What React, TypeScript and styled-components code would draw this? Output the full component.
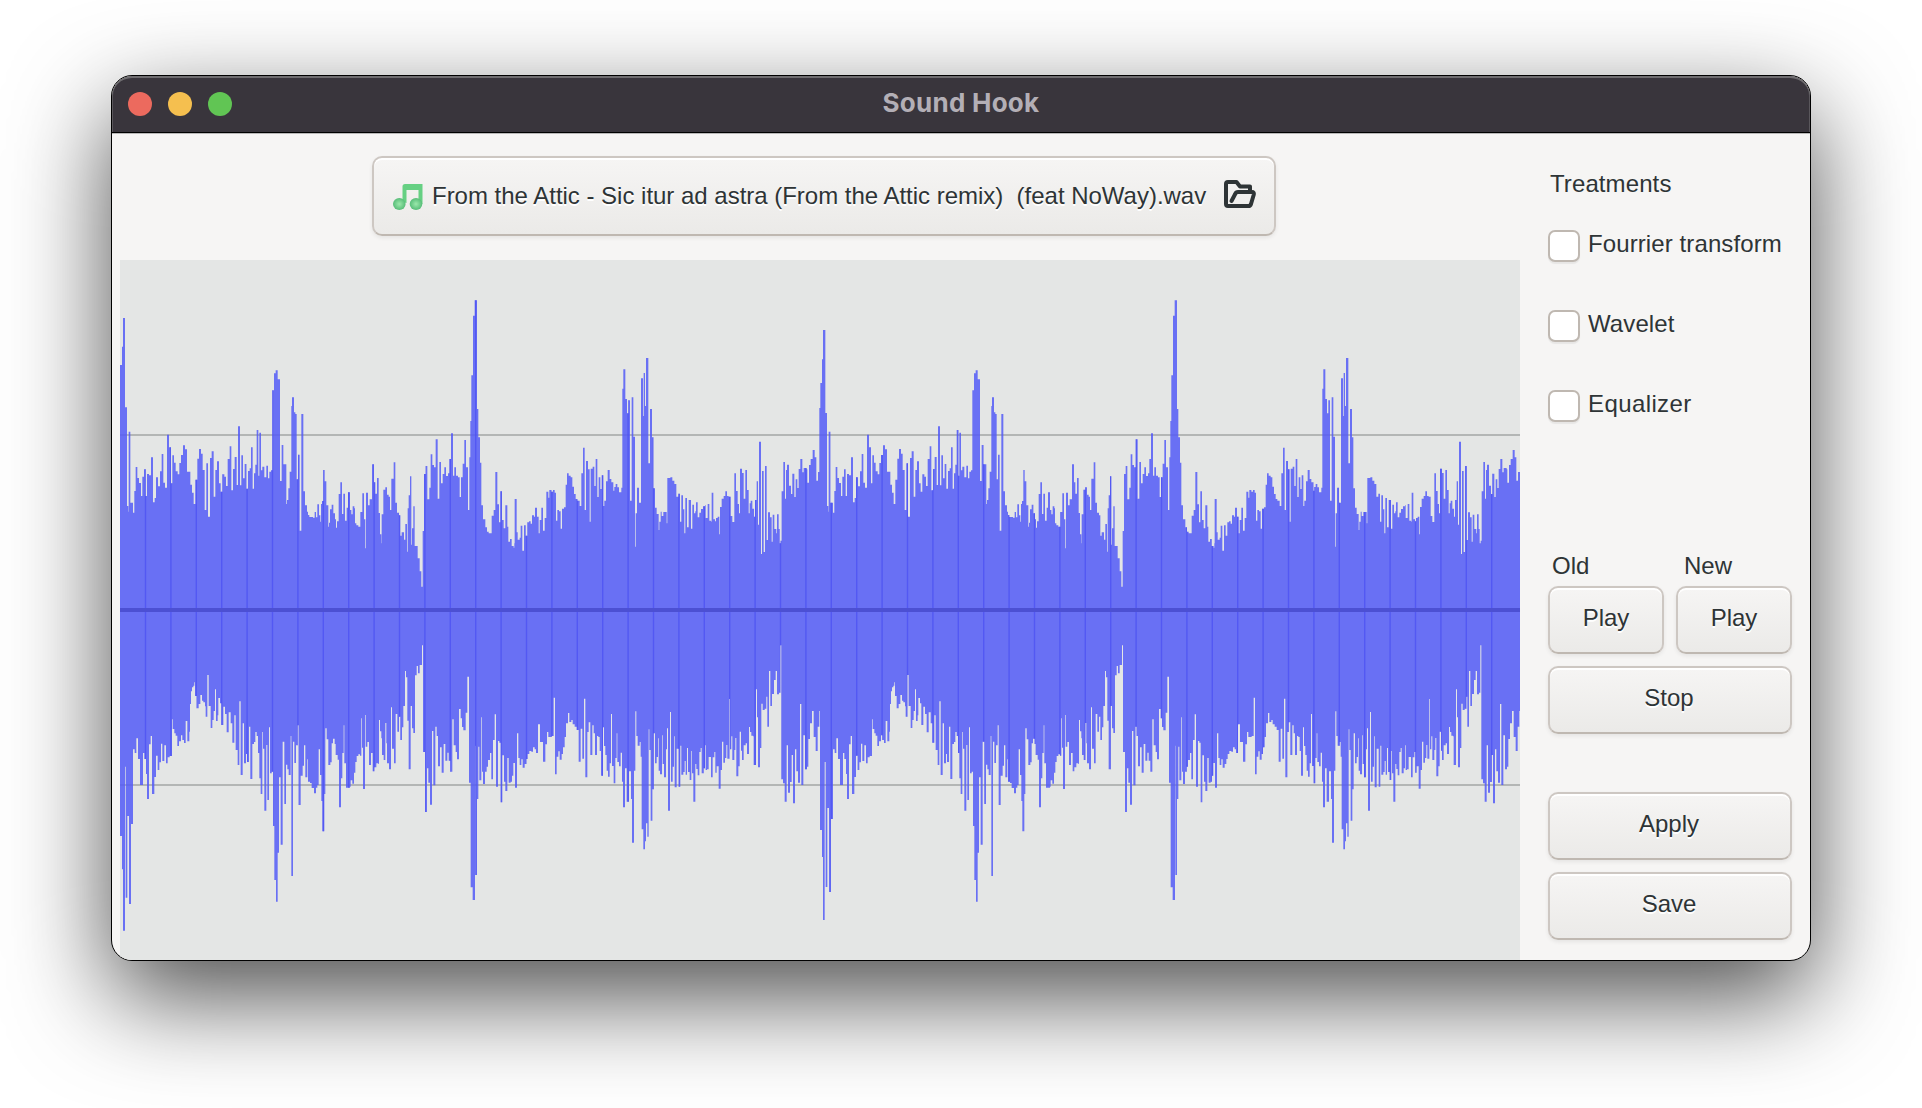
import React from 'react';
import styled, { createGlobalStyle } from 'styled-components';

const GlobalStyle = createGlobalStyle`
  html, body { margin: 0; padding: 0; background: #fff; overflow: hidden; }
  * { box-sizing: border-box; }
`;

const Desktop = styled.div`
  height: 1108px;
  padding: 75px 111px 147px;
  background: #fff;
  font-family: 'Liberation Sans', Arial, sans-serif;
  font-size: 24px;
  color: #2e3436;
`;

const Window = styled.div`
  width: 1700px;
  height: 886px;
  display: flex;
  flex-direction: column;
  border: 1px solid #000;
  border-radius: 21px;
  overflow: hidden;
  background: #f6f5f4;
  box-shadow: 0 36px 100px rgba(0, 0, 0, 0.7);
`;

const TitleBar = styled.header`
  height: 57px;
  flex: none;
  display: grid;
  grid-template-columns: 1fr auto 1fr;
  align-items: center;
  padding: 0 16px 1px;
  background: #39353c;
  border-bottom: 1px solid #000;
  border-radius: 20px 20px 0 0;
  box-shadow: inset 0 2px 0 #6f6d70, inset 1px 0 0 #5a575c, inset -1px 0 0 #5a575c;
`;

const Lights = styled.div`
  display: flex;
  gap: 16px;
`;

const Light = styled.span<{ $color: string }>`
  width: 24px;
  height: 24px;
  border-radius: 50%;
  background: ${(p) => p.$color};
`;

const Title = styled.h1`
  margin: 0 0 2px;
  font: 700 26px/32px Inter, sans-serif;
  letter-spacing: 0.25px;
  color: #b3afb6;
`;

const Body = styled.main`
  flex: 1;
  min-height: 0;
  display: flex;
  padding-left: 8px;
  border-top: 1px solid #b9b8b8;
`;

const Viewer = styled.section`
  width: 1400px;
  display: flex;
  flex-direction: column;
`;

const FileBar = styled.div`
  height: 126px;
  flex: none;
  padding: 22px 0 0 252px;
`;

const Button = styled.button`
  height: 68px;
  min-width: 0;
  display: flex;
  align-items: center;
  justify-content: center;
  padding: 0 0 4px;
  font: inherit;
  color: inherit;
  text-shadow: 0 2px 0 #fff;
  background: linear-gradient(#f6f5f4, #ebeae8) padding-box;
  border: 2px solid #cdc7c2;
  border-bottom-color: #bfb8b1;
  border-radius: 10px;
  box-shadow: inset 0 2px 0 #fff, 0 2px 4px rgba(0, 0, 0, 0.07);
`;

const FileButton = styled(Button)`
  width: 904px;
  height: 80px;
  justify-content: flex-start;
  padding: 0 17px 0 19px;
`;

const FileName = styled.span`
  width: 774px;
  margin: 0 18px 0 9px;
  letter-spacing: -0.015px;
  text-align: left;
  white-space: pre;
`;

const Panel = styled.aside`
  width: 272px;
  display: flex;
  flex-direction: column;
  padding: 35px 0 0 28px;
`;

const PanelTitle = styled.h2`
  margin: 0 0 25px 2px;
  font: inherit;
  line-height: 30px;
  letter-spacing: 0.1px;
`;

const Option = styled.label<{ $track: number }>`
  height: 80px;
  display: flex;
  align-items: flex-start;
  gap: 8px;
  line-height: 40px;
  letter-spacing: ${(p) => p.$track}px;
  white-space: nowrap;
`;

const Box = styled.span`
  width: 32px;
  height: 32px;
  flex: none;
  margin-top: 6px;
  border: 2px solid #bfb8b1;
  border-radius: 7px;
  background: #fff;
  box-shadow: 0 2px 1px rgba(0, 0, 0, 0.06);
`;

const Playback = styled.div`
  width: 244px;
  display: grid;
  grid-template-columns: 1fr 1fr;
  column-gap: 12px;
  margin-top: 87px;
`;

const Caption = styled.span<{ $indent: number }>`
  padding-left: ${(p) => p.$indent}px;
  line-height: 30px;
  margin-bottom: 5px;
`;

const WideButton = styled(Button)<{ $gap: number }>`
  width: 244px;
  margin-top: ${(p) => p.$gap}px;
  padding-right: 2px;
`;

const Plot = styled.svg`
  display: block;
  width: 1400px;
  height: 700px;
  flex: none;
  background: #e4e6e5;
`;

/* Envelope of one loop of the track: "x,y" steps in thirds of a pixel. */
const PEAKS_A = `30,345 36,290 39,204 45,472 51,768 55,785 56,545 61,758 69,788 73,723 77,651 82,684 87,699 93,738 97,680 102,658 107,738 111,672 117,676 123,622 129,757 134,744 138,682 144,709 150,664 155,612 160,698 165,713 171,554 177,592 183,700 187,616 192,638 197,664 203,673 208,639 213,615 219,586 225,598 231,665 241,704 246,728 251,762 256,689 262,626 267,597 273,611 278,660 284,780 289,640 294,800 300,624 305,604 311,740 316,660 321,634 327,700 332,725 337,673 343,680 348,708 353,627 359,589 364,721 369,657 374,621 380,705 384,529 390,706 394,616 399,685 404,642 409,716 414,663 419,655 423,592 428,716 432,670 436,644 440,540 445,677 448,548 453,661 457,650 463,682 469,647 474,685 478,665 483,661 487,421 492,370 497,361 503,388 510,693 515,585 520,643 529,762 531,750 535,715 539,665 544,468 546,442 552,487 556,492 560,688 564,614 569,842 574,492 580,724 585,766 591,785 594,795 598,801 609,803 614,786 618,802 622,763 627,796 631,815 633,762 636,753 640,660 644,694 649,766 655,830 657,818 660,778 665,764 670,790 675,808 678,833 681,814 686,732 691,697 696,792 700,731 705,812 710,773 714,727 720,780 724,793 728,769 733,775 735,820 739,826 745,830 751,786 757,730 762,808 766,895 768,728 774,766 779,748 786,643 792,697 796,731 801,684 806,789 810,853 814,880 815,793 820,719 826,712 831,734 836,740 840,780 844,686 851,637 856,758 861,788 867,796 871,857 875,847 882,869 886,822 891,905 893,775 896,736 900,679 904,884 906,835 910,769 914,888 923,925 929,964 934,1010 938,843 942,672 947,648 952,748 958,713 962,613 967,645 972,652 977,568 983,746 988,636 993,700 998,672 1003,652 1008,678 1014,670 1018,627 1023,550 1029,677 1033,652 1038,677 1044,682 1049,741`;
const PEAKS_B = `3,682 8,641 13,570 18,652 24,780 28,622 31,513 34,376 39,197 44,151 51,477 55,562 60,638 64,766 69,808 76,832 81,845 86,850 95,797 101,780 106,666 112,763 117,817 121,724 126,810 131,835 136,766 142,830 145,875 150,867 155,888 161,893 163,880 164,747 170,847 173,869 179,863 182,827 187,902 192,826 197,857 202,817 207,814 212,821 216,796 222,800 225,773 231,800 236,850 239,810 244,773 249,842 254,804 259,725 265,743 268,720 274,725 279,720 284,728 288,812 292,780 297,784 302,836 306,776 312,772 317,704 321,670 326,677 332,682 337,710 342,732 347,747 352,752 359,768 364,670 369,593 374,780 378,633 384,658 389,815 392,656 398,650 403,708 407,627 412,741 416,682 421,717 425,676 430,768 433,752 438,694 443,660 449,687 454,697 460,722 463,711 467,702 472,712 477,727 484,713 487,416 490,358 496,447 501,490 505,451 510,752 515,442 520,560 525,890 527,790 531,713 537,758 543,385 549,498 551,369 555,468 558,324 565,640 570,477 576,562 580,715 585,773 590,792 596,840 598,815 602,785 605,798 610,786 620,820 622,684 631,682 637,692 643,702 649,740 655,731 660,815 664,736 669,778 673,850 676,744 681,832 686,750 693,836 697,764 702,790 706,784 708,757 713,802 718,788 723,777 729,769 735,766 737,804 743,762 748,812 754,816 755,728 760,808 765,814 768,804 773,800 778,853 780,771 785,746 791,738 796,724 801,738 806,740 812,798 817,816 823,670 828,723 833,762 837,790 840,656 846,669 851,746 856,660 861,720 866,790 869,760 872,752 877,776 882,800 885,750 890,694 894,824 897,575 903,912 906,663 911,906 915,648 920,870 924,787 930,802 935,875 938,794 943,837 949,850 951,793 956,837 959,880 962,872 965,724 970,636 975,746 978,660 981,644 987,707 993,732 997,671 1003,741 1007,688 1012,714 1016,657 1021,627 1027,667 1031,654 1040,658 1042,698 1047,645 1052,627 1058,600 1064,622 1069,692 1074,666`;
const DIPS_A = `30,708 36,808 39,992 45,500 47,893 52,648 57,912 63,672 69,448 74,459 79,415 84,477 90,555 99,459 103,477 108,522 111,597 117,433 122,408 126,582 133,531 138,467 143,510 148,487 153,431 157,483 163,436 168,490 173,472 179,468 186,358 188,387 193,400 197,407 202,438 207,424 213,406 217,420 222,429 227,363 232,424 238,395 240,312 243,274 246,262 250,257 253,247 255,288 260,325 266,312 271,285 276,302 280,307 285,319 287,350 292,225 296,318 302,384 307,360 311,333 315,268 318,363 323,346 325,294 330,310 334,375 340,320 345,342 350,397 356,337 362,370 367,428 373,346 377,450 383,495 388,304 392,525 398,370 402,490 408,462 411,486 417,380 421,537 427,432 432,426 436,396 440,408 444,459 448,535 452,582 457,396 459,446 463,632 469,435 472,600 477,382 480,520 485,515 489,678 493,840 498,905 503,758 507,532 512,734 518,425 523,612 528,494 532,508 536,525 542,408 544,828 549,425 553,489 558,436 563,376 566,615 572,527 578,497 582,436 586,532 592,478 594,545 600,549 605,564 612,580 618,563 622,555 626,448 630,525 634,603 637,694 643,582 646,385 650,418 655,495 661,487 665,430 669,416 674,432 677,465 683,479 687,622 693,535 697,459 701,376 703,490 708,563 720,560 722,541 727,551 732,518 736,486 740,468 745,463 750,467 754,355 756,443 759,567 765,345 767,440 772,426 777,495 783,459 788,514 793,502 799,490 805,492 807,360 810,394 814,415 816,465 821,480 826,369 829,430 831,490 837,508 843,322 846,446 852,490 857,342 862,395 867,350 871,420 876,382 880,318 885,213 888,232 892,362 896,508 902,318 906,385 910,399 915,226 920,198 924,220 929,195 936,136 939,456 945,636 951,505 955,548 960,614 966,393 970,556 976,380 980,408 984,499 990,442 995,518 1001,432 1006,482 1012,458 1016,482 1021,515 1027,358 1031,436 1037,456 1041,478 1047,327`;
const DIPS_B = `2,355 6,381 10,391 17,338 22,230 27,548 32,862 38,900 45,437 46,825 51,597 55,440 58,541 64,352 66,515 69,552 75,515 80,500 84,480 90,459 94,538 99,420 104,343 108,560 114,423 118,428 122,607 127,466 132,545 136,573 142,474 146,548 152,545 156,527 160,489 165,563 171,400 175,474 179,495 184,478 188,503 194,492 199,477 203,462 208,453 214,455 219,442 224,448 228,459 234,373 240,426 249,485 256,433 261,396 265,411 275,408 281,293 285,523 290,470 295,454 299,479 305,462 309,442 314,411 318,370 324,339 328,366 334,360 338,373 344,380 350,390 356,485 362,386 367,476 372,296 376,532 382,396 386,367 391,465 397,376 401,400 405,465 411,408 415,411 419,453 423,527 429,382 432,438 436,465 440,512 444,530 449,490 453,342 456,498 461,550 466,474 470,400 472,486 477,499 482,458 486,545 489,622 495,505 500,605 507,514 513,597 516,728 522,512 526,334 529,408 533,437 539,426 542,470 545,688 550,748 555,724 558,670 562,710 566,388 568,450 572,662 577,568 581,400 585,490 590,471 594,415 596,512 600,523 606,406 608,492 612,532 618,448 621,385 624,632 630,336 633,545 638,500 642,409 644,562 650,446 656,560 661,437 664,524 670,516 674,483 677,524 681,444 684,516 689,540 694,453 696,520 700,605 706,492 709,507 713,526 718,456 722,444 725,520 731,505 735,436 737,510 741,508 746,471 753,532 758,472 763,456 766,518 770,499 776,566 782,510 786,425 790,488 795,474 799,435 802,476 808,297 810,448 814,409 817,480 823,450 826,414 829,529 835,499 839,395 843,452 846,480 851,436 857,430 861,462 867,381 870,396 874,407 879,409 881,495 888,268 891,352 894,502 900,444 904,311 908,330 914,326 919,290 922,380 927,213 931,318 936,282 942,240 947,213 951,283 957,278 961,136 964,538 969,550 974,605 980,436 984,578 990,546 995,465 999,610 1005,448 1009,514 1014,548 1020,312 1024,555 1030,406 1035,508 1041,500 1045,417 1050,370 1056,333 1061,411 1067,453 1073,380 1078,333`;

/* The second loop enters with a slightly softer attack. */
const ATTACK_PEAKS = '28,474 31,399 36,328 39,240 46,489';
const ATTACK_DIPS = '30,690 36,771 39,960 44,486 47,861 52,624 57,876 63,657';

type Step = [number, number];
const parse = (text: string, shift: number): Step[] =>
  text.split(' ').map((pair) => {
    const [x, y] = pair.split(',').map(Number);
    return [x + shift, y];
  });

const buildSteps = (a: string, b: string, attack: string, attackEnd: number, top: number): Step[] => {
  const loop = [...parse(a, -30), ...parse(b, 1020)];
  const second = [...parse(attack, -30), ...loop.filter(([x]) => x > attackEnd - 30)];
  return [...loop, ...second.map(([x, y]): Step => [x + 2100, y])]
    .sort((p, q) => p[0] - q[0])
    .map(([x, y]): Step => [x / 3, top + y / 3]);
};

const outline = (steps: Step[]) => {
  let d = 'M0 350';
  steps.forEach(([x, y]) => {
    d += `H${x.toFixed(2)}V${y.toFixed(2)}`;
  });
  return `${d}H1400V350Z`;
};

const PEAK_PATH = outline(buildSteps(PEAKS_A, PEAKS_B, ATTACK_PEAKS, 50, -10));
const DIP_PATH = outline(buildSteps(DIPS_A, DIPS_B, ATTACK_DIPS, 65, 340));
const SEAMS = Array.from({ length: 54 }, (_, i) => 25.4 * (i + 1));

const Waveform = () => (
  <Plot viewBox="0 0 1400 700">
    <defs>
      <clipPath id="wave">
        <path d={PEAK_PATH} />
        <path d={DIP_PATH} />
      </clipPath>
    </defs>
    <path d="M0 175H1400M0 525H1400" stroke="#b3b6b5" strokeWidth="2" />
    <path d={PEAK_PATH} fill="rgba(83,91,247,.85)" />
    <path d={DIP_PATH} fill="rgba(83,91,247,.85)" />
    <g clipPath="url(#wave)">
      {SEAMS.map((x) => (
        <rect key={x} x={x - 0.6} y="0" width="1.4" height="700" fill="#4a4ff2" opacity="0.7" />
      ))}
    </g>
    <rect y="348" width="1400" height="4" fill="#4c50d3" />
  </Plot>
);

const Note = styled.svg`
  flex: none;
  margin-top: 2px;
`;

const MusicIcon = () => (
  <Note width="30" height="30" viewBox="0 0 30 30">
    <defs>
      <radialGradient id="note">
        <stop offset="0" stopColor="#9be8ab" />
        <stop offset="1" stopColor="#57bd78" />
      </radialGradient>
    </defs>
    <path d="M9.500 20V4.500Q9.500 2 12 2H29.500V22H25.500V8H13.500V21Z" fill="#66d083" />
    <ellipse cx="6.300" cy="22" rx="6.300" ry="6" fill="url(#note)" />
    <ellipse cx="23" cy="22" rx="6.300" ry="6" fill="url(#note)" />
  </Note>
);

const Folder = styled.svg`
  flex: none;
  margin-bottom: 4px;
  overflow: visible;
`;

const FolderIcon = () => (
  <Folder
    width="32"
    height="32"
    viewBox="0 0 32 32"
    fill="none"
    stroke="#2e3436"
    strokeWidth="4"
    strokeLinejoin="round"
    strokeLinecap="round"
  >
    <path d="M26 12V8.500H16L12.500 4H4Q2 4 2 6V26Q2 28 4 28H24.500Q26.300 28 27 26L29.800 16.500Q30.300 14 28 14H14Q12 14 11.200 16L7.500 23" />
  </Folder>
);

const TREATMENTS = [
  { name: 'Fourrier transform', track: 0.1 },
  { name: 'Wavelet', track: 0.1 },
  { name: 'Equalizer', track: 0.4 },
];

export default function App() {
  return (
    <Desktop>
      <GlobalStyle />
      <Window>
        <TitleBar>
          <Lights>
            <Light $color="#ec6a5e" />
            <Light $color="#f5bf4f" />
            <Light $color="#61c554" />
          </Lights>
          <Title>Sound Hook</Title>
        </TitleBar>
        <Body>
          <Viewer>
            <FileBar>
              <FileButton>
                <MusicIcon />
                <FileName>From the Attic - Sic itur ad astra (From the Attic remix)  (feat NoWay).wav</FileName>
                <FolderIcon />
              </FileButton>
            </FileBar>
            <Waveform />
          </Viewer>
          <Panel>
            <PanelTitle>Treatments</PanelTitle>
            {TREATMENTS.map(({ name, track }) => (
              <Option key={name} $track={track}>
                <Box />
                {name}
              </Option>
            ))}
            <Playback>
              <Caption $indent={4}>Old</Caption>
              <Caption $indent={8}>New</Caption>
              <Button>Play</Button>
              <Button>Play</Button>
            </Playback>
            <WideButton $gap={12}>Stop</WideButton>
            <WideButton $gap={58}>Apply</WideButton>
            <WideButton $gap={12}>Save</WideButton>
          </Panel>
        </Body>
      </Window>
    </Desktop>
  );
}
